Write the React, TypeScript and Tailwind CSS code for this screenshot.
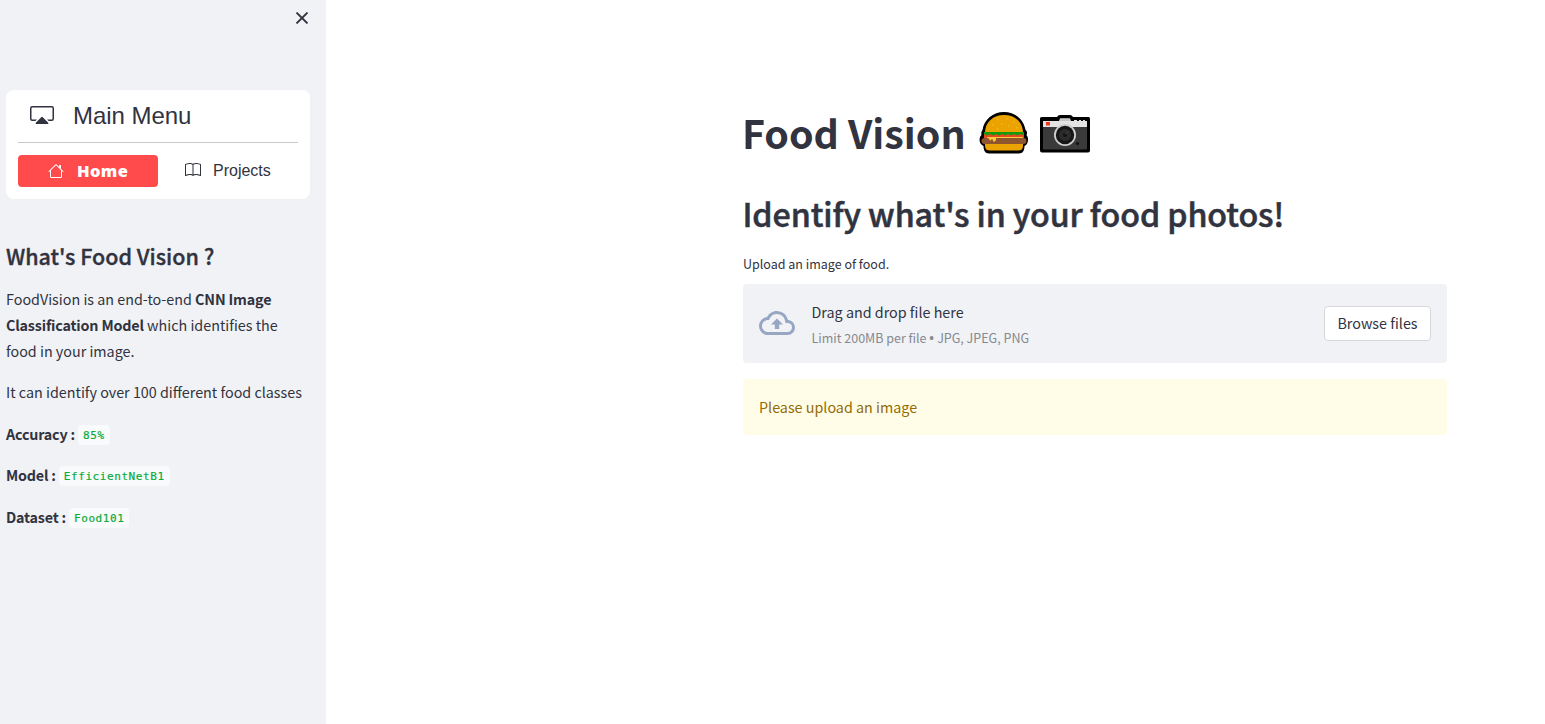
import type { ReactNode } from "react";
import { BsBook, BsCast } from "react-icons/bs";
import { MdOutlineCloudUpload } from "react-icons/md";

function HouseIcon() {
  return (
    <svg className="h-4 w-4" viewBox="0 0 16 16" fill="currentColor">
      <path
        fillRule="evenodd"
        d="M2 13.5V7h1v6.5a.5.5 0 0 0 .5.5h9a.5.5 0 0 0 .5-.5V7h1v6.5a1.5 1.5 0 0 1-1.5 1.5h-9A1.5 1.5 0 0 1 2 13.5zm11-11V6l-2-2V2.5a.5.5 0 0 1 .5-.5h1a.5.5 0 0 1 .5.5z"
      />
      <path
        fillRule="evenodd"
        d="M7.293 1.5a1 1 0 0 1 1.414 0l6.647 6.646a.5.5 0 0 1-.708.708L8 2.207 1.354 8.854a.5.5 0 1 1-.708-.708L7.293 1.5z"
      />
    </svg>
  );
}

function Burger() {
  return (
    <svg className="h-[42px] w-[50px]" viewBox="0 0 50 42">
      <path
        d="M25 0C14 0 5 7.500 3.500 18C2.500 19 2 21 2.500 23C0 25 0 30 2 32C3 33 3.500 33.500 4.500 34C4.500 38 6 41.500 10 41.500H40C44 41.500 45.500 38 45.500 34C49.500 32 50 26 47.500 23C48.500 21 48 19 46.500 18C45 7.500 36 0 25 0Z"
        fill="#000"
      />
      <path d="M6 21C6 10 14 3 25 3S44 10 44 21Z" fill="#eaa300" />
      <path d="M6 32H44V34Q44 38.500 39 38.500H11Q6 38.500 6 34Z" fill="#eaa300" />
      <rect x="5" y="22" width="40" height="4.500" fill="#e8481d" />
      <path d="M5 20H45V22L43 23L41 22L38 23.500L35 22L32 23.500L29 22L26 23.500L23 22L20 23.500L17 22L14 23.500L11 22L8 23.500L5 22Z" fill="#139b0e" />
      <rect x="2.500" y="26" width="45" height="6" rx="3" fill="#8e562e" />
      <path d="M8 25H44V26H17V28Q15.500 31 14 29V27.500H12V28.500Q10.500 29 10 26.500L8 26Z" fill="#ffc83d" />
      <path d="M18 7h1.500v1.500H18zM27 6h1.500v1.500H27zM34 9h1.500v1.500H34zM22 11h1.500v1.500H22zM13 12h1.500v1.500H13zM29 13h1.500v1.500H29zM18 16h1.500v1.500H18zM37 15h1.500v1.500H37z" fill="#f5b720" />
    </svg>
  );
}

function Camera() {
  return (
    <svg className="mt-0.5 h-[38px] w-[50px]" viewBox="0 0 50 38">
      <path d="M1.500 2H17Q18 0 20 0H30Q32 0 33 2H48.500Q50 2 50 3.500V35.500Q50 37.500 48 37.500H2Q0 37.500 0 35.500V3.500Q0 2 1.500 2Z" fill="#000" />
      <rect x="3" y="12" width="44" height="22.500" rx="1" fill="#3a3a3a" />
      <path d="M3 6H19L20 3.500H30L31 6H34V5H37V6H39V5H41V6H43V5H45V6H47V12H3Z" fill="#e3e3e3" />
      <rect x="20" y="3.500" width="10" height="2.500" fill="#c7c7c7" />
      <rect x="6" y="7" width="4" height="3.500" fill="#f03a17" />
      <circle cx="25" cy="20" r="11" fill="#cfcfcf" />
      <circle cx="25" cy="20" r="9.200" fill="#161616" />
      <circle cx="25" cy="20" r="6" fill="#2b2b2b" />
      <circle cx="25" cy="20" r="2" fill="#111" />
      <path d="M25 19.500L28 16.500" stroke="#484848" />
      <circle cx="37.500" cy="28.500" r="1.600" fill="#111" />
    </svg>
  );
}

function Stat({ label, children }: { label: string; children: ReactNode }) {
  return (
    <p className="flex h-[25.6px] items-center">
      <strong className="tracking-[-0.2px]">{label}</strong>
      <code className="mt-0.5 ml-[3px] flex h-5 items-center rounded bg-[#f9fafb] px-[5px] pt-px font-['DejaVu_Sans_Mono',monospace] text-[11px] leading-none tracking-[0.58px] text-[#09ab3b] [-webkit-text-stroke:0.2px_#09ab3b]">
        {children}
      </code>
    </p>
  );
}

function Sidebar() {
  return (
    <aside className="w-[326px] shrink-0 bg-[#f0f2f6] pl-1.5 pr-4">
      <div className="flex h-[90px] justify-end pt-3">
        <svg className="h-3 w-4" viewBox="0 0 16 12" fill="none" stroke="#31333f" strokeWidth="1.8">
          <path d="M2.500 0.500L13.500 11.500M13.500 0.500L2.500 11.500" />
        </svg>
      </div>
      <nav className="h-[109px] rounded-lg bg-white px-3 font-['Liberation_Sans',Arial,sans-serif]">
        <div className="flex h-[53px] items-center gap-[19px] border-b border-[#c8c9cb] pl-3 text-2xl">
          <BsCast className="-mt-0.5 h-6 w-6" />
          <span className="tracking-[-0.05px]">Main Menu</span>
        </div>
        <div className="mt-3 grid h-8 grid-cols-2 text-base">
          <a className="flex items-center gap-[13px] rounded bg-[#ff4b4b] pl-[30px] text-white">
            <HouseIcon />
            <span className="font-['Open_Sans',sans-serif] text-[16.5px] font-extrabold tracking-[0.35px]">Home</span>
          </a>
          <a className="flex items-center gap-3 pl-[27px]">
            <BsBook className="-mt-0.5 h-4 w-4" />
            <span>Projects</span>
          </a>
        </div>
      </nav>
      <h2 className="mt-[42px] text-[21.5px] leading-[29px] font-medium [-webkit-text-stroke:0.35px_#31333f]">What's Food Vision ?</h2>
      <div className="mt-[16.4px] flex flex-col gap-4 text-[14.33px] leading-[25.6px]">
        <p>
          FoodVision is an end-to-end <strong className="tracking-[-0.17px]">CNN Image<br />Classification Model</strong> which identifies the<br />food in your image.
        </p>
        <p className="whitespace-nowrap">It can identify over 100 different food classes</p>
        <Stat label="Accuracy :">85%</Stat>
        <Stat label="Model :">EfficientNetB1</Stat>
        <Stat label="Dataset :">Food101</Stat>
      </div>
    </aside>
  );
}

export default function App() {
  return (
    <div className="flex h-screen overflow-hidden bg-white font-['Noto_Sans_CJK_SC',sans-serif] text-[#31333f]">
      <Sidebar />
      <main className="flex-1 pl-[417px] pt-[105px]">
        <div className="w-[704px]">
          <div className="flex h-[53px] items-start">
            <h1 className="w-[236px] whitespace-nowrap text-[39.4px] leading-[53px] font-bold -indent-px">Food Vision</h1>
            <div className="flex items-center gap-[11px] pt-[7px]">
              <Burger />
              <Camera />
            </div>
          </div>
          <h2 className="mt-[34px] whitespace-nowrap text-[32.2px] leading-[43px] font-medium tracking-[-0.09px] -indent-[0.5px] [-webkit-text-stroke:0.55px_#31333f]">
            Identify what's in your food photos!
          </h2>
          <p className="mt-[19px] text-[12.5px] leading-5">Upload an image of food.</p>
          <section className="mt-[10px] flex h-[79px] items-center rounded bg-[#f0f2f6] px-4">
            <MdOutlineCloudUpload className="-mt-px h-9 w-9 text-[#97a6c3]" />
            <div className="ml-[16.5px] flex-1 pt-0.5">
              <p className="text-[14.33px] leading-[26px]">Drag and drop file here</p>
              <p className="text-[12.5px] leading-[25px] text-[#87898f]">
                Limit 200MB per file <span className="inline-block w-[5px] font-['Open_Sans',sans-serif] font-bold leading-none">•</span> JPG, JPEG, PNG
              </p>
            </div>
            <button className="h-[35px] w-[107px] rounded border border-[#d6d7d9] bg-white pb-0.5 text-[14.33px]">Browse files</button>
          </section>
          <div className="mt-4 flex h-14 items-center rounded bg-[#fffce7] px-4 text-[14.33px] text-[#926c05]">
            Please upload an image
          </div>
        </div>
      </main>
    </div>
  );
}
